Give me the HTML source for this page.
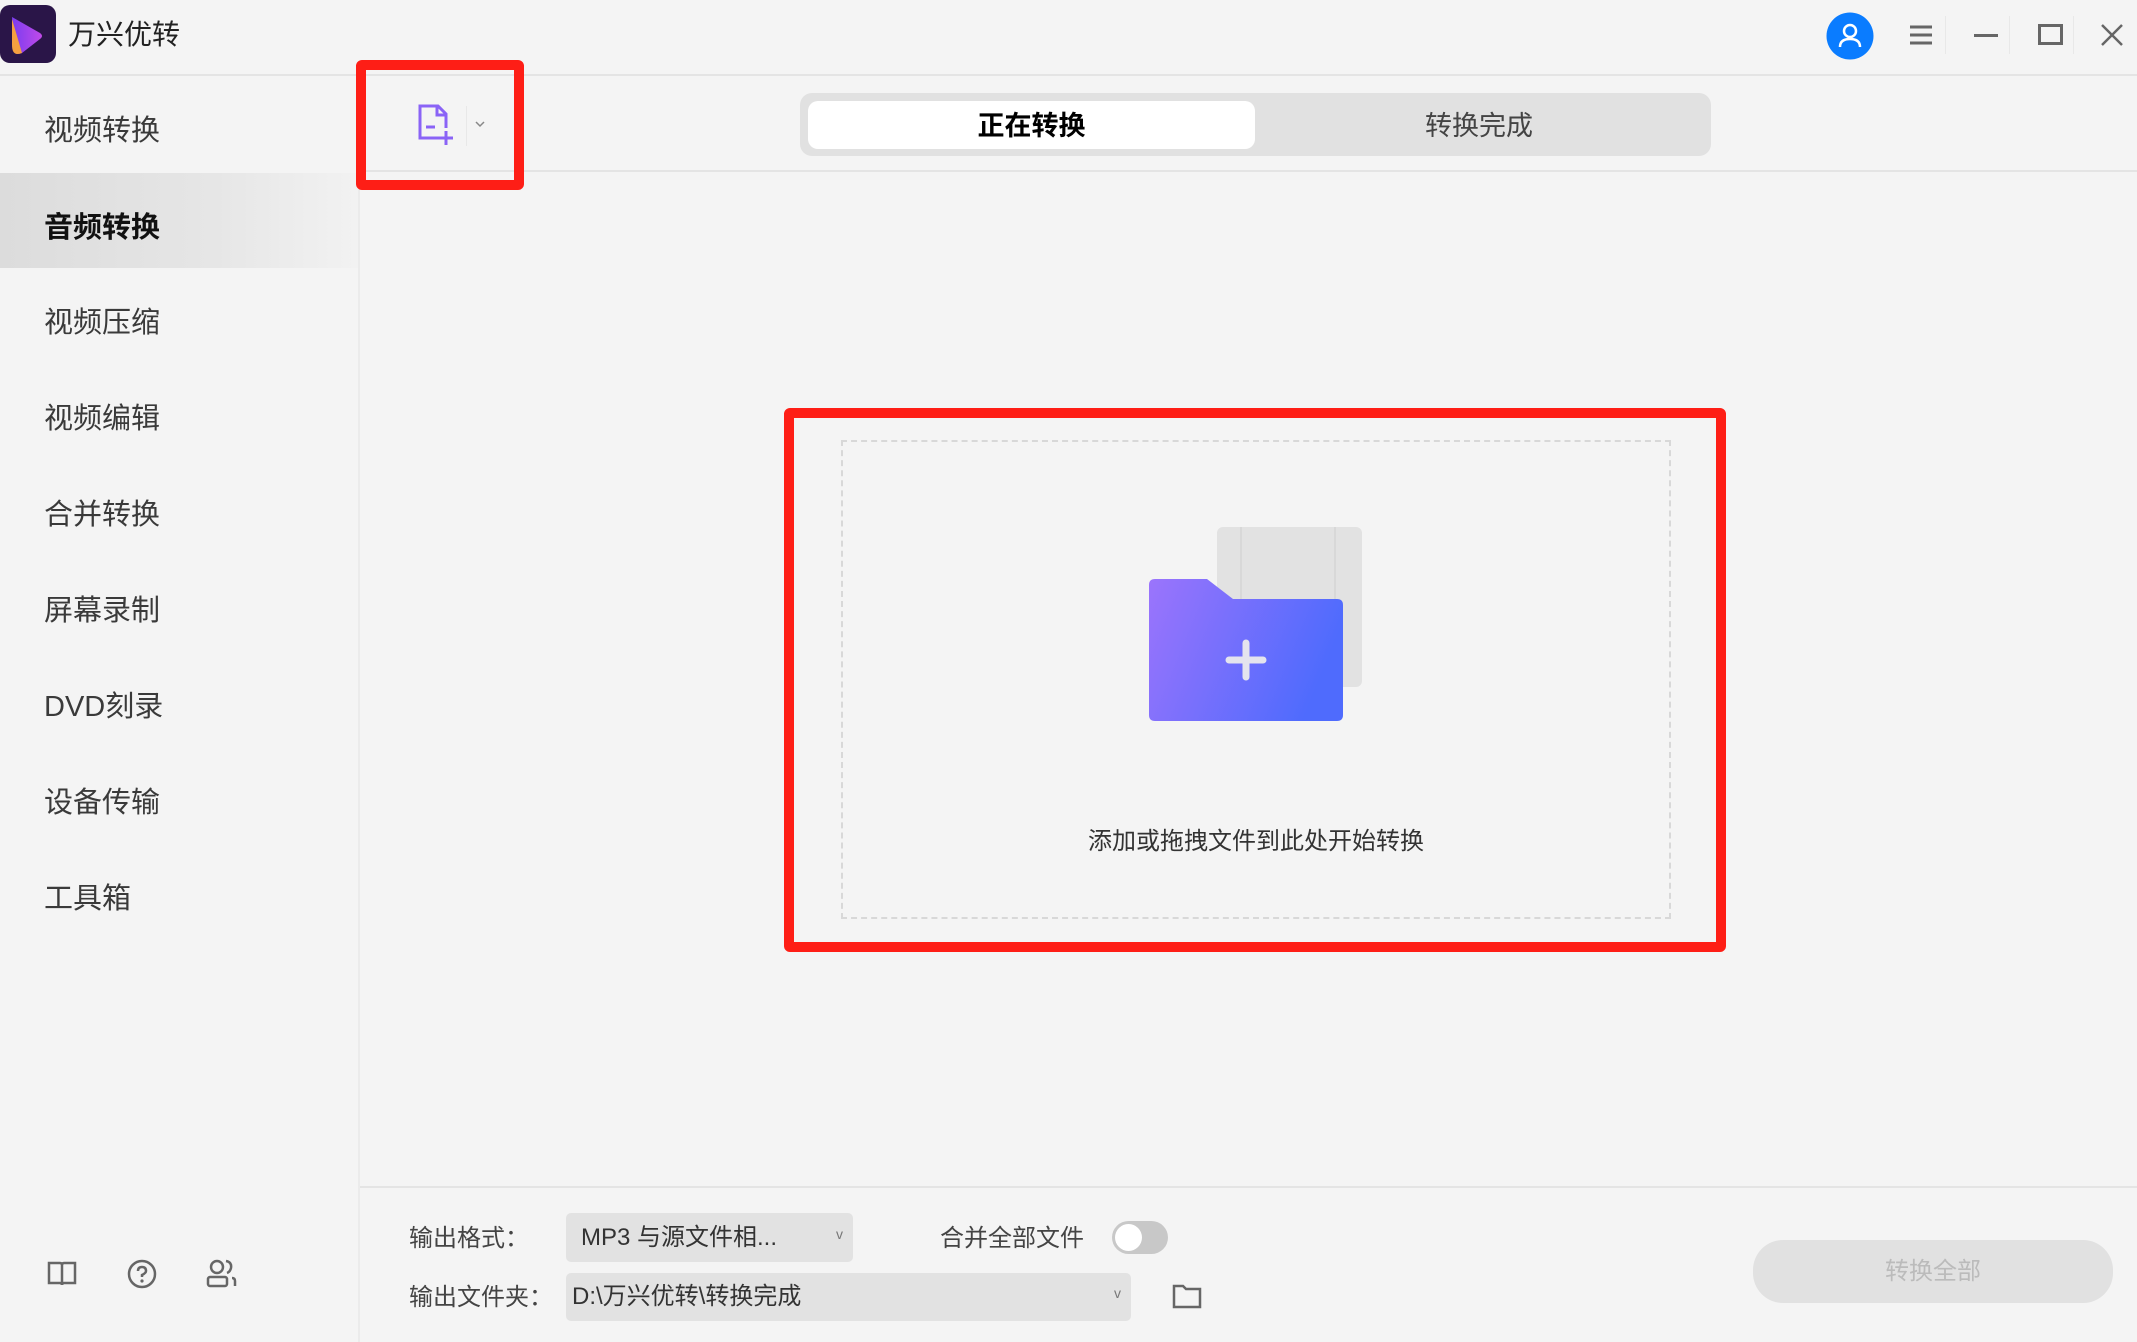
<!DOCTYPE html>
<html><head><meta charset="utf-8"><style>
*{margin:0;padding:0;box-sizing:border-box}
body{width:2137px;height:1342px;background:#f4f4f4;font-family:"Liberation Sans","Noto Sans CJK SC",sans-serif;position:relative;overflow:hidden;color:#333}
.a{position:absolute}
.nav{position:absolute;left:44px;font-size:29px;color:#3a3a3a;line-height:40px}
.lbl{font-size:24px;color:#444;line-height:30px}
</style></head><body>
<div class="a" style="left:0;top:0;width:2137px;height:76px;background:#f4f4f4;border-bottom:2px solid #e4e4e4"></div>
<svg class="a" style="left:0;top:5px" width="56" height="58" viewBox="0 0 56 58"><defs><linearGradient id="lg" x1="0" x2="1" y1="0" y2="0"><stop offset="0" stop-color="#7b3cf0"/><stop offset="1" stop-color="#c04ae8"/></linearGradient></defs><rect x="0" y="0" width="56" height="58" rx="10" fill="#2a1548"/><path d="M12 12 L40 28 Q44 31 40 34 L22 48 Q12 52 14 40 Z" fill="url(#lg)"/><path d="M12 14 L22 48 Q12 52 12 40 Z" fill="#f5a040"/></svg>
<div class="a" style="left:68px;top:15px;font-size:28px;color:#222;line-height:40px">万兴优转</div>
<svg class="a" style="left:1826px;top:12px" width="48" height="48" viewBox="0 0 48 48"><circle cx="24" cy="24" r="23.5" fill="#0a7cff"/><circle cx="24" cy="19" r="6" fill="none" stroke="#fff" stroke-width="2.5"/><path d="M14 35 Q14 27 24 27 Q34 27 34 35" fill="none" stroke="#fff" stroke-width="2.5"/></svg>
<svg class="a" style="left:1906px;top:22px" width="30" height="26"><g stroke="#666" stroke-width="3"><line x1="4" y1="5" x2="26" y2="5"/><line x1="4" y1="13" x2="26" y2="13"/><line x1="4" y1="21" x2="26" y2="21"/></g></svg>
<div class="a" style="left:1945px;top:16px;width:1px;height:38px;background:#e8e8e8"></div>
<div class="a" style="left:1974px;top:34px;width:24px;height:3px;background:#666"></div>
<div class="a" style="left:2009px;top:16px;width:1px;height:38px;background:#e8e8e8"></div>
<div class="a" style="left:2038px;top:24px;width:25px;height:21px;border:3px solid #666"></div>
<div class="a" style="left:2073px;top:16px;width:1px;height:38px;background:#e8e8e8"></div>
<svg class="a" style="left:2100px;top:23px" width="24" height="24"><g stroke="#666" stroke-width="2.5"><line x1="2" y1="2" x2="22" y2="22"/><line x1="22" y1="2" x2="2" y2="22"/></g></svg>
<div class="a" style="left:358px;top:76px;width:2px;height:1266px;background:#ebebeb"></div>
<div class="a" style="left:0;top:173px;width:358px;height:95px;background:linear-gradient(90deg,#dcdcdc,#e6e6e6 60%,#f2f2f2)"></div>
<div class="nav" style="top:111px">视频转换</div>
<div class="nav" style="top:208px;font-weight:bold;color:#111">音频转换</div>
<div class="nav" style="top:303px">视频压缩</div>
<div class="nav" style="top:399px">视频编辑</div>
<div class="nav" style="top:495px">合并转换</div>
<div class="nav" style="top:591px">屏幕录制</div>
<div class="nav" style="top:687px">DVD刻录</div>
<div class="nav" style="top:783px">设备传输</div>
<div class="nav" style="top:879px">工具箱</div>
<svg class="a" style="left:46px;top:1260px" width="32" height="28" viewBox="0 0 32 28"><path d="M3 3 H14 Q16 3 16 5 V25 Q16 23 14 23 H3 Z M29 3 H18 Q16 3 16 5 V25 Q16 23 18 23 H29 Z" fill="none" stroke="#666" stroke-width="2.5"/></svg>
<svg class="a" style="left:126px;top:1258px" width="32" height="32" viewBox="0 0 32 32"><circle cx="16" cy="16" r="13" fill="none" stroke="#666" stroke-width="2.5"/><path d="M12 13 Q12 9 16 9 Q20 9 20 13 Q20 15 16 17 V19" fill="none" stroke="#666" stroke-width="2.5"/><circle cx="16" cy="23" r="1.6" fill="#666"/></svg>
<svg class="a" style="left:205px;top:1258px" width="34" height="32" viewBox="0 0 34 32"><circle cx="12" cy="9" r="6" fill="none" stroke="#666" stroke-width="2.5"/><path d="M21 3 Q27 4 26 10 Q25 14 22 15" fill="none" stroke="#666" stroke-width="2.5"/><rect x="3" y="19" width="19" height="9" rx="2" fill="none" stroke="#666" stroke-width="2.5"/><path d="M27 20 Q30 20 30 23 V28" fill="none" stroke="#666" stroke-width="2.5"/></svg>
<div class="a" style="left:360px;top:170px;width:1777px;height:2px;background:#e4e4e4"></div>
<svg class="a" style="left:416px;top:102px" width="40" height="46" viewBox="0 0 40 46"><path d="M28 36 H4 V4 H22 L30 12 V26" fill="none" stroke="#8a63f6" stroke-width="3"/><path d="M21 4 V13 H30" fill="none" stroke="#8a63f6" stroke-width="3"/><line x1="10" y1="25" x2="19" y2="25" stroke="#8a63f6" stroke-width="3"/><line x1="23" y1="36" x2="37" y2="36" stroke="#8a63f6" stroke-width="3"/><line x1="30" y1="29" x2="30" y2="43" stroke="#8a63f6" stroke-width="3"/></svg>
<div class="a" style="left:466px;top:106px;width:1px;height:40px;background:#e8e8e8"></div>
<svg class="a" style="left:475px;top:120px" width="10" height="8"><path d="M1 2 L5 6 L9 2" fill="none" stroke="#888" stroke-width="1.5"/></svg>
<div class="a" style="left:356px;top:60px;width:168px;height:130px;border:10px solid #fe1e16;border-radius:6px"></div>
<div class="a" style="left:800px;top:93px;width:911px;height:63px;background:#e1e1e1;border-radius:12px"></div>
<div class="a" style="left:808px;top:101px;width:447px;height:48px;background:#fff;border-radius:10px;text-align:center;font-size:27px;font-weight:bold;line-height:50px;color:#000">正在转换</div>
<div class="a" style="left:1255px;top:101px;width:448px;height:48px;text-align:center;font-size:27px;line-height:50px;color:#444">转换完成</div>
<div class="a" style="left:841px;top:440px;width:830px;height:479px;border:2px dashed #d8d8d8"></div>
<div class="a" style="left:784px;top:408px;width:942px;height:544px;border:10px solid #fe1e16;border-radius:6px"></div>
<svg class="a" style="left:1145px;top:525px" width="220" height="200" viewBox="0 0 220 200"><rect x="72" y="2" width="145" height="160" rx="6" fill="#e2e2e2"/><line x1="96" y1="2" x2="96" y2="162" stroke="#d4d4d4" stroke-width="1.5"/><line x1="190" y1="2" x2="190" y2="162" stroke="#d4d4d4" stroke-width="1.5"/><defs><linearGradient id="g" x1="0" x2="1" y1="0" y2="0.3"><stop offset="0" stop-color="#9b74fc"/><stop offset="1" stop-color="#4f6bfd"/></linearGradient></defs><path d="M10 54 Q4 54 4 60 V190 Q4 196 10 196 H192 Q198 196 198 190 V80 Q198 74 192 74 H88 L62 54 Z" fill="url(#g)"/><g stroke="#e4e4ee" stroke-width="7" stroke-linecap="round"><line x1="84" y1="135" x2="118" y2="135"/><line x1="101" y1="118" x2="101" y2="152"/></g></svg>
<div class="a" style="left:841px;top:821px;width:830px;text-align:center;font-size:24px;color:#333">添加或拖拽文件到此处开始转换</div>
<div class="a" style="left:360px;top:1186px;width:1777px;height:2px;background:#e4e4e4"></div>
<div class="a lbl" style="left:409px;top:1224px">输出格式：</div>
<div class="a" style="left:566px;top:1213px;width:287px;height:49px;background:#e2e2e2;border-radius:5px;font-size:24px;line-height:50px;padding-left:15px;color:#333">MP3 与源文件相...</div>
<div class="a" style="left:836px;top:1226px;font-size:14px;color:#777">v</div>
<div class="a lbl" style="left:940px;top:1224px">合并全部文件</div>
<div class="a" style="left:1112px;top:1221px;width:56px;height:33px;background:#c8c8c8;border-radius:17px"></div>
<div class="a" style="left:1115px;top:1224px;width:27px;height:27px;background:#fff;border-radius:50%"></div>
<div class="a lbl" style="left:409px;top:1283px">输出文件夹：</div>
<div class="a" style="left:566px;top:1273px;width:565px;height:48px;background:#e2e2e2;border-radius:5px;font-size:24px;line-height:47px;padding-left:6px;color:#333">D:\万兴优转\转换完成</div>
<div class="a" style="left:1114px;top:1285px;font-size:14px;color:#777">v</div>
<svg class="a" style="left:1172px;top:1283px" width="30" height="26" viewBox="0 0 30 26"><path d="M2 3 H11 L14 6 H28 V24 H2 Z" fill="none" stroke="#666" stroke-width="2.5"/></svg>
<div class="a" style="left:1753px;top:1240px;width:360px;height:63px;background:#e1e1e1;border-radius:30px;text-align:center;line-height:63px;font-size:24px;color:#bbb">转换全部</div>
</body></html>
